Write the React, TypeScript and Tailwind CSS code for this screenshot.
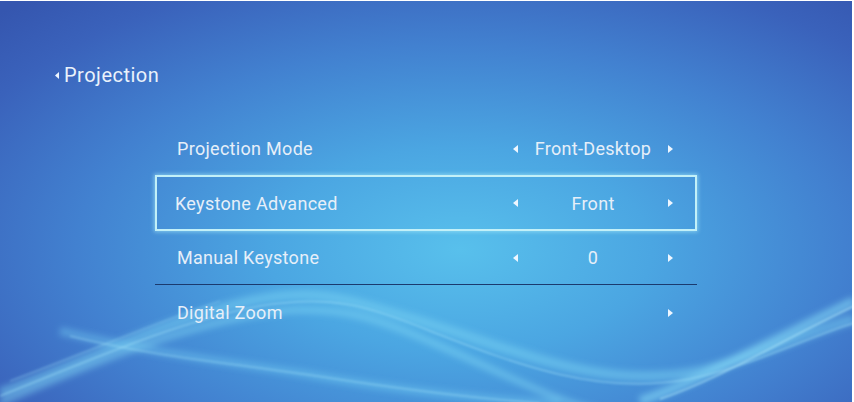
import React from "react";

const LeftTri = () => (
  <svg width="5" height="8" viewBox="0 0 5 8" className="block">
    <path d="M5 0 L0 4 L5 8 Z" fill="#eef6ff" />
  </svg>
);
const RightTri = () => (
  <svg width="5" height="8" viewBox="0 0 5 8" className="block">
    <path d="M0 0 L5 4 L0 8 Z" fill="#eef6ff" />
  </svg>
);

type Row = { label: string; value?: string; left?: boolean; selected?: boolean; divider?: boolean; h: string };

const rows: Row[] = [
  { label: "Projection Mode", value: "Front-Desktop", left: true, h: "h-[53px]" },
  { label: "Keystone Advanced", value: "Front", left: true, selected: true, h: "h-[56px]" },
  { label: "Manual Keystone", value: "0", left: true, divider: true, h: "h-[54px]" },
  { label: "Digital Zoom", h: "h-[55px]" },
];

export default function App() {
  return (
    <div
      className="relative w-[854px] h-[402px] overflow-hidden border-t border-white border-r-2"
      style={{ fontFamily: "Roboto, 'Liberation Sans', sans-serif" }}
    >
      <div className="absolute inset-0 bg-[radial-gradient(ellipse_75%_85%_at_54%_62%,#58c0ec_0%,#4ba6e2_30%,#4281d0_60%,#3a62bb_85%,#3556af_100%)]" />
      <svg
        className="absolute inset-0"
        width="854"
        height="402"
        viewBox="0 0 854 402"
      >
        <defs>
          <filter id="b1" x="-10%" y="-50%" width="120%" height="200%">
            <feGaussianBlur stdDeviation="3" />
          </filter>
          <filter id="b2" x="-10%" y="-50%" width="120%" height="200%">
            <feGaussianBlur stdDeviation="1.2" />
          </filter>
        </defs>
        <g filter="url(#b1)" fill="none">
          <path d="M0 392 C 90 360, 160 320, 250 300 C 320 285, 350 300, 420 320 C 520 350, 600 390, 700 370 C 760 355, 810 330, 854 318" stroke="#7ad4f4" strokeOpacity="0.5" strokeWidth="10" />
          <path d="M60 330 C 140 350, 220 360, 300 372 C 400 390, 500 400, 560 402" stroke="#78d2f5" strokeOpacity="0.4" strokeWidth="8" />
          <path d="M0 402 C 120 350, 200 320, 280 310 C 340 304, 380 318, 440 345 C 520 380, 560 402, 600 410" stroke="#86dbf7" strokeOpacity="0.45" strokeWidth="7" />
          <path d="M640 400 C 700 380, 760 345, 854 300" stroke="#86daf7" strokeOpacity="0.6" strokeWidth="9" />
        </g>
        <g filter="url(#b2)" fill="none">
          <path d="M0 395 C 100 355, 180 320, 260 305 C 330 293, 370 305, 430 330 C 520 365, 600 395, 690 378 C 760 362, 810 335, 854 322" stroke="#a8e6fa" strokeOpacity="0.45" strokeWidth="1.5" />
          <path d="M70 335 C 150 355, 230 362, 310 374 C 400 388, 480 398, 540 402" stroke="#a8e6fa" strokeOpacity="0.4" strokeWidth="1.5" />
          <path d="M10 380 C 90 350, 160 320, 220 300" stroke="#a8e6fa" strokeOpacity="0.35" strokeWidth="1.2" />
          <path d="M660 398 C 720 378, 780 340, 854 305" stroke="#b5ecfb" strokeOpacity="0.6" strokeWidth="1.5" />
        </g>
      </svg>

      <div className="relative flex flex-col">
        <div className="flex pl-[55px] pt-[61px] h-[121px] items-start">
          <div className="flex items-center gap-[5px] h-[26px]">
            <svg width="4" height="7" viewBox="0 0 4 7" className="block">
              <path d="M4 0 L0 3.5 L4 7 Z" fill="#eef6ff" />
            </svg>
            <span className="text-[20px] leading-[26px] tracking-[0.5px] text-[#eaf2fb]">Projection</span>
          </div>
        </div>

        <div className="ml-[155px] w-[542px] flex flex-col">
          {rows.map((r) => (
            <div
              key={r.label}
              className={
                "flex items-center " +
                r.h +
                (r.selected
                  ? " border-2 border-[#c2f0f8] shadow-[0_0_4px_1px_rgba(170,235,250,0.6)] pl-[18px] pr-[22px]"
                  : " pl-[22px] pr-[24px]") +
                (r.divider ? " border-b border-[#1b3a6e]" : "")
              }
            >
              <span className="flex-1 text-[18px] text-[#e6eff9] tracking-[0.3px]">{r.label}</span>
              <div className="w-[160px] flex items-center justify-between">
                <div className={r.left ? "" : "invisible"}>
                  <LeftTri />
                </div>
                <span className="text-[18px] text-[#e6eff9] tracking-[0.3px]">{r.value ?? ""}</span>
                <RightTri />
              </div>
            </div>
          ))}
        </div>
      </div>
    </div>
  );
}
